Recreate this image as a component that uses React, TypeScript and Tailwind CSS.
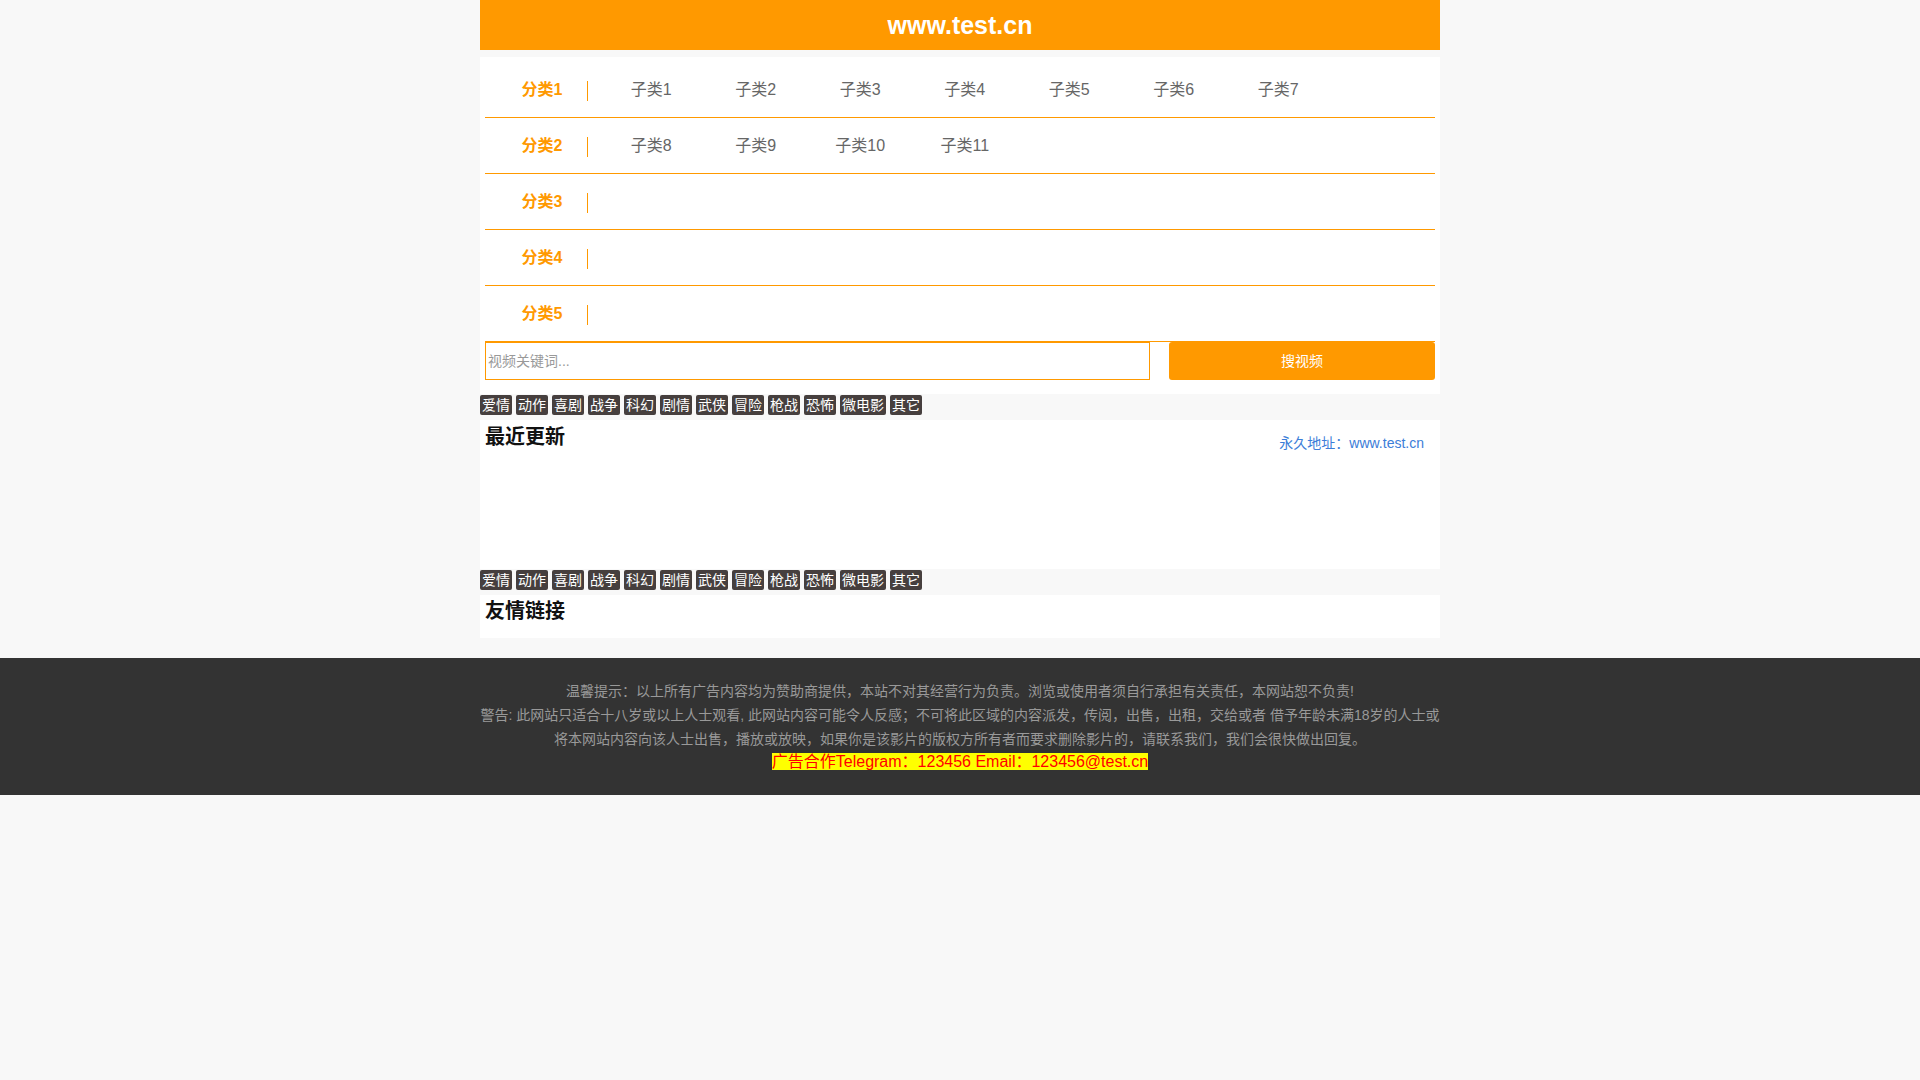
import React from "react";

const FONT = '"Liberation Sans", "Noto Sans CJK SC", sans-serif';

const rows: { label: string; items: string[] }[] = [
  { label: "分类1", items: ["子类1", "子类2", "子类3", "子类4", "子类5", "子类6", "子类7"] },
  { label: "分类2", items: ["子类8", "子类9", "子类10", "子类11"] },
  { label: "分类3", items: [] },
  { label: "分类4", items: [] },
  { label: "分类5", items: [] },
];

const tags = ["爱情", "动作", "喜剧", "战争", "科幻", "剧情", "武侠", "冒险", "枪战", "恐怖", "微电影", "其它"];

function TagBar() {
  return (
    <div className="flex gap-[4px] bg-[#f8f8f8] pt-[1px] pb-[5px]">
      {tags.map((t) => (
        <a
          key={t}
          className="h-[20px] rounded-[2px] bg-[#463f3e] px-[2px] text-[14px] leading-[20px] text-white"
        >
          {t}
        </a>
      ))}
    </div>
  );
}

export default function App() {
  return (
    <div className="min-h-[1080px] bg-[#f8f8f8]" style={{ fontFamily: FONT }}>
      <div className="mx-auto w-[960px]">
        <div className="h-[50px] bg-[#ff9900] text-center text-[25px] font-bold leading-[50px] text-white">
          www.test.cn
        </div>

        <div className="mt-[7px] bg-white px-[5px] pt-[5px] pb-[14px]">
          {rows.map((r) => (
            <div key={r.label} className="flex h-[56px] items-center border-b border-[#ff9900]">
              <div className="flex w-[114px] shrink-0 items-center pl-[17px]">
                <span className="w-[80px] text-center text-[16px] font-bold text-[#ff9900]">{r.label}</span>
                <span className="mt-[3px] ml-[5px] h-[20px] w-px bg-[#ff9900]" />
              </div>
              <div className="flex">
                {r.items.map((it) => (
                  <a key={it} className="w-[104.5px] text-center text-[16px] text-[#666]">
                    {it}
                  </a>
                ))}
              </div>
            </div>
          ))}
          <div className="flex h-[38px] justify-between">
            <input
              className="h-[38px] w-[665px] border border-[#ff9900] px-[2px] text-[14px] outline-none placeholder:text-[#999]"
              placeholder="视频关键词..."
              style={{ fontFamily: FONT }}
            />
            <button
              className="h-[38px] w-[266px] rounded-[3px] bg-[#ff9900] text-[14px] text-white"
              style={{ fontFamily: FONT }}
            >
              搜视频
            </button>
          </div>
        </div>

        <TagBar />

        <div className="h-[149px] bg-white pt-[3px] pl-[5px] pr-[16px]">
          <div className="flex items-start justify-between">
            <h2 className="text-[20px] font-bold leading-[28px] text-[#111]">最近更新</h2>
            <a className="pt-[10px] text-[14px] leading-[20px] text-[#3b7dd8]">永久地址：www.test.cn</a>
          </div>
        </div>

        <TagBar />

        <div className="h-[43px] bg-white pt-[2px] pl-[5px]">
          <h2 className="text-[20px] font-bold leading-[28px] text-[#111]">友情链接</h2>
        </div>
      </div>

      <div className="mt-[20px] bg-[#333] pt-[21px] pb-[24px]">
        <div className="mx-auto w-[960px] text-center text-[14px] leading-[24px] text-[#999]">
          <p className="whitespace-nowrap">
            温馨提示：以上所有广告内容均为赞助商提供，本站不对其经营行为负责。浏览或使用者须自行承担有关责任，本网站恕不负责!
          </p>
          <p className="whitespace-nowrap">
            警告: 此网站只适合十八岁或以上人士观看, 此网站内容可能令人反感；不可将此区域的内容派发，传阅，出售，出租，交给或者 借予年龄未满18岁的人士或
          </p>
          <p className="whitespace-nowrap">
            将本网站内容向该人士出售，播放或放映，如果你是该影片的版权方所有者而要求删除影片的，请联系我们，我们会很快做出回复。
          </p>
          <p className="mt-[2px] leading-[17px]">
            <span className="inline-block h-[17px] bg-[#ffff00] text-[16px] leading-[17px] text-[#ff0000]">
              广告合作Telegram：123456 Email：123456@test.cn
            </span>
          </p>
        </div>
      </div>
    </div>
  );
}
